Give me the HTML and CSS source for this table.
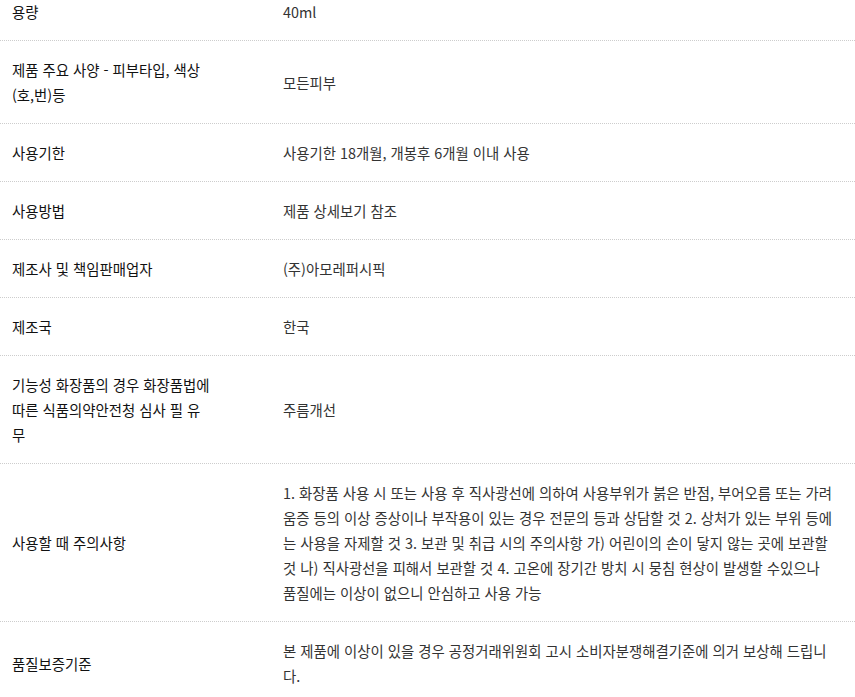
FILE: index.html
```html
<!DOCTYPE html>
<html lang="ko">
<head>
    <meta charset="UTF-8">
    <meta name="viewport" content="width=device-width, initial-scale=1.0">
    <title>상품정보 제공고시</title>
    <link rel="stylesheet" href="styles.css">
</head>
<body>
    <div class="spec">
        <div class="row">
            <div class="label">용량</div>
            <div class="value">40ml</div>
        </div>
        <div class="row">
            <div class="label">제품 주요 사양 - 피부타입, 색상 (호,번)등</div>
            <div class="value">모든피부</div>
        </div>
        <div class="row">
            <div class="label">사용기한</div>
            <div class="value">사용기한 18개월, 개봉후 6개월 이내 사용</div>
        </div>
        <div class="row">
            <div class="label">사용방법</div>
            <div class="value">제품 상세보기 참조</div>
        </div>
        <div class="row">
            <div class="label">제조사 및 책임판매업자</div>
            <div class="value">(주)아모레퍼시픽</div>
        </div>
        <div class="row">
            <div class="label">제조국</div>
            <div class="value">한국</div>
        </div>
        <div class="row">
            <div class="label">기능성 화장품의 경우 화장품법에 따른 식품의약안전청 심사 필 유무</div>
            <div class="value">주름개선</div>
        </div>
        <div class="row">
            <div class="label">사용할 때 주의사항</div>
            <div class="value">1. 화장품 사용 시 또는 사용 후 직사광선에 의하여 사용부위가 붉은 반점, 부어오름 또는 가려움증 등의 이상 증상이나 부작용이 있는 경우 전문의 등과 상담할 것 2. 상처가 있는 부위 등에는 사용을 자제할 것 3. 보관 및 취급 시의 주의사항 가) 어린이의 손이 닿지 않는 곳에 보관할 것 나) 직사광선을 피해서 보관할 것 4. 고온에 장기간 방치 시 뭉침 현상이 발생할 수있으나 품질에는 이상이 없으니 안심하고 사용 가능</div>
        </div>
        <div class="row">
            <div class="label">품질보증기준</div>
            <div class="value">본 제품에 이상이 있을 경우 공정거래위원회 고시 소비자분쟁해결기준에 의거 보상해 드립니다.</div>
        </div>
    </div>
</body>
</html>
```

FILE: styles.css
```css
body {
    margin: 0;
    background-color: #fff;
    font-family: "Noto Sans CJK KR", "Noto Sans", sans-serif;
    font-size: 14.4px;
    line-height: 25px;
}

/* page is scrolled a little, first row is cut at the top */
.spec {
    margin-top: -17px;
}

.row {
    display: grid;
    grid-template-columns: 271px 1fr;
    align-items: center;
    border-bottom: 1px dotted #cdcdcd;
}

.label {
    padding: 16px 12px;
    max-width: 199.5px;
    color: #111;
}

.value {
    padding: 16px 20px 16px 12px;
    color: #333;
}
```
